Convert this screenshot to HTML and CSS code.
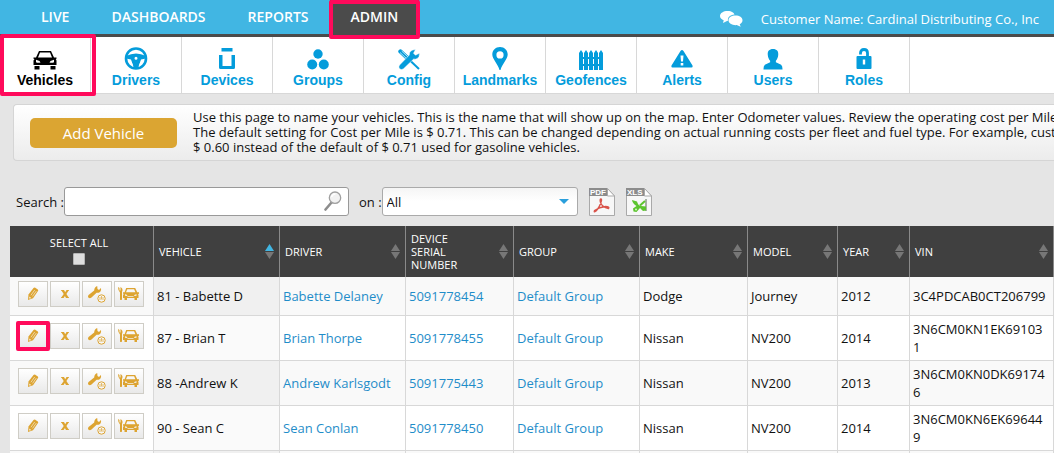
FILE: index.html
```
<!DOCTYPE html>
<html lang="en">
<head>
    <meta charset="UTF-8">
    <meta name="viewport" content="width=device-width, initial-scale=1.0">
    <title>Admin - Vehicles</title>
    <link rel="stylesheet" href="styles.css">
</head>
<body>
    <!-- shared icons -->
    <svg class="sprite" aria-hidden="true">
        <symbol id="i-sort" viewBox="0 0 9 15">
            <path class="up" d="M4.5 0L9 7H0z"/>
            <path class="down" d="M0 8h9l-4.5 7z"/>
        </symbol>
        <symbol id="i-pencil" viewBox="0 0 12 14">
            <path d="M1 13l.5-5.500L6.500 1q.8-.9 1.800-.3l2.500 1.700q.8.7.2 1.700L6 11.200z"/>
            <path d="M3.900 8.300L7.700 3M5.500 9.400L9.300 4.100" stroke="#f6f6f6" stroke-width=".6" fill="none"/>
            <path d="M2.200 9.500l2 1.500-1.700.7z" fill="#f6f6f6"/>
        </symbol>
        <symbol id="i-delete" viewBox="0 0 8 8">
            <path d="M0 0h3l1.200 2.200L5.500 0H8v.8H7.500L5.400 4l2.100 3.200H8V8H5L3.900 5.900 2.600 8H0v-.8h.5L2.700 4 .6.8H0z"/>
        </symbol>
        <symbol id="i-service" viewBox="0 0 18 17">
            <path d="M9.200 0l.3 3 1.500.9L12.900 2q.8 3-1.600 4.400-1.300.7-2.700.3L3.500 11.600q-1.700 1.200-2.900.2-1.200-1.300 0-2.900L6.200 4.500Q6.200 1.300 9.200 0z"/>
            <circle cx="13.500" cy="12.500" r="3.700" fill="#f6f6f6" stroke="#dda431" stroke-width="1"/>
            <path d="M13.500 10v3.500M12 11v3M15 11v3" stroke="#dda431" stroke-width=".7"/>
        </symbol>
        <symbol id="i-repair" viewBox="0 0 21 14">
            <path d="M0 0l1.500 1v2.500h1V0q3 1.500 1.500 5v7.500q-1.300 1-2 0V5.500Q0 4 0 0z"/>
            <path d="M8.200 1h9l2 4.200H21v1.600l-1 .3.500 1V11H19v2h-2.500v-2H9v2H6.500v-2H5V8l.8-1-.8-.4V5.200h1.600zM9.300 2.300L8 5.200h9.400L16.100 2.300zM7 7.300v1.500l2.500.2-.7-1.300zM18.500 7.300v1.500L16 9l.7-1.300z" fill-rule="evenodd"/>
            <path d="M9.500 9.500h6" stroke="#f6f6f6" stroke-width=".7"/>
        </symbol>
    </svg>

    <header class="topbar">
        <nav class="main-nav">
            <a href="#live">LIVE</a>
            <a href="#dashboards">DASHBOARDS</a>
            <a href="#reports">REPORTS</a>
            <a href="#admin" class="active marked">ADMIN</a>
        </nav>
        <div class="account">
            <a href="#chat" aria-label="Messages">
                <svg width="23" height="16" viewBox="0 0 23 16" fill="#fff">
                    <path d="M7.500 0C12 0 14 2 14.500 3.500 10 4 7.500 6 8 9.800L7 10l-4 2 .7-2.800C1.500 8.500 0 7 0 5c0-3 3.500-5 7.500-5z"/>
                    <path d="M15.500 4.500c4 0 7 2 7 4.800 0 1.800-1 3-2.800 4l1 2.500-4-1.700c-4.500.3-8.200-1.500-8.200-4.800 0-2.800 3-4.800 7-4.800z"/>
                </svg>
            </a>
            <span>Customer Name: Cardinal Distributing Co., Inc</span>
        </div>
    </header>

    <nav class="sub-nav">
        <a href="#vehicles" class="active marked">
            <svg width="24" height="20" viewBox="0 0 24 20">
                <path d="M6 1h12l3 6.500h2.500v1.200L22.800 9l.7 1.500V15h-23v-4.500L1.500 9 .5 8.700V7.500H3zM7 2.500L5 7.500h14l-2-5zM3 9.800v2.500q2 1 4.500.2L6.500 11zM21 9.800v2.500q-2 1-4.500.2l1-1.500z" fill-rule="evenodd"/>
                <path d="M1.500 16h5v3.500h-5zM17.500 16h5v3.500h-5z"/>
            </svg>
            Vehicles
        </a>
        <a href="#drivers">
            <svg width="24" height="23" viewBox="0 0 24 23">
                <circle cx="12" cy="11.500" r="10" fill="none" stroke="currentColor" stroke-width="2.600"/>
                <path d="M2 9q10-5 20 0v2.500l-5 1-3 9h-4l-3-9-5-1zM12 9.700a1.500 1.500 0 100 3 1.500 1.500 0 100-3z" fill-rule="evenodd"/>
                <path d="M4 13.500l3.500 1.200L9.300 19Q5.500 17.500 4 13.500zM20 13.500l-3.500 1.200L14.700 19q3.800-1.500 5.300-5.500z" fill="#fff"/>
            </svg>
            Drivers
        </a>
        <a href="#devices">
            <svg width="18" height="22" viewBox="0 0 18 22">
                <path d="M3.500 0h11v3.500h-11zM1 7h3.500v11h9V7H17v12.500q0 1.500-1.500 1.500h-13Q1 21 1 19.500z"/>
            </svg>
            Devices
        </a>
        <a href="#groups">
            <svg width="22" height="21" viewBox="0 0 22 21">
                <circle cx="11" cy="5" r="4.700"/>
                <circle cx="5.200" cy="15.500" r="5"/>
                <circle cx="16.800" cy="15.500" r="5"/>
            </svg>
            Groups
        </a>
        <a href="#config">
            <svg width="22" height="21" viewBox="0 0 22 21">
                <path d="M2.500 2.500l9 8.500" fill="none" stroke="currentColor" stroke-width="4.400" stroke-linecap="round"/>
                <path d="M2 3.500l8 7.500M3.700 2l8 7.500" fill="none" stroke="#fff" stroke-width=".7"/>
                <path d="M11 10.500l10 9.500" fill="none" stroke="currentColor" stroke-width="2"/>
                <path d="M17.500.5l-2 3.700 2 2 3.800-2q.7 4-2.300 5.500-1.600.8-3.300.3L5.500 19.800q-2 1.500-3.900 0-1.500-1.800 0-3.800L11.300 6Q11 1 17.500.500z" stroke="#fff" stroke-width=".5"/>
            </svg>
            Config
        </a>
        <a href="#landmarks">
            <svg width="16" height="23" viewBox="0 0 16 23">
                <path d="M8 0c4.500 0 7.700 3.400 7.700 7.500C15.700 12 10 17 8.500 23h-1C6 17 .3 12 .3 7.500.300 3.400 3.500 0 8 0zM8 4.300a3.600 3.600 0 100 7.200 3.600 3.600 0 100-7.200z" fill-rule="evenodd"/>
            </svg>
            Landmarks
        </a>
        <a href="#geofences">
            <svg width="24" height="20" viewBox="0 0 24 20">
                <path d="M0 3L2 0l2 3v17H0zM5 3l2-3 2 3v17H5zM10 3l2-3 2 3v17h-4zM15 3l2-3 2 3v17h-4zM20 3l2-3 2 3v17h-4z"/>
                <path d="M0 7h24v2H0zM0 14h24v2H0z"/>
            </svg>
            Geofences
        </a>
        <a href="#alerts">
            <svg width="22" height="20" viewBox="0 0 22 20">
                <path d="M9.500 1q1.500-1.800 3 0L21.500 15.500q.5 2-1 2h-19q-1.500 0-1-2zM9.500 5.500l.5 6h2l.5-6zM9.700 13v2.500h2.600V13z" fill-rule="evenodd"/>
            </svg>
            Alerts
        </a>
        <a href="#users">
            <svg width="20" height="21" viewBox="0 0 20 22">
                <path d="M10 0c4 0 5.800 2.300 5.500 6-.2 3-1.300 5-2.500 6.300V14l5.500 2.500Q20 17.500 20 21.500H0q0-4 1.500-5L7 14v-1.700C5.800 11 4.700 9 4.500 6 4.200 2.300 6 0 10 0z"/>
            </svg>
            Users
        </a>
        <a href="#roles">
            <svg width="16" height="22" viewBox="0 0 16 22">
                <path d="M4.500 6.500V5q0-3.500 3.500-3.500T11.500 5v4" fill="none" stroke="currentColor" stroke-width="2.800"/>
                <path d="M1.500 8h13q1 0 1 1v11q0 1-1 1h-13q-1 0-1-1V9q0-1 1-1zM6.800 11.500v5h2.400v-5z" fill-rule="evenodd"/>
            </svg>
            Roles
        </a>
    </nav>

    <main>
        <section class="info">
            <button type="button" class="add">Add Vehicle</button>
            <p>
                Use this page to name your vehicles. This is the name that will show up on the map. Enter Odometer values. Review the operating cost per Mile<br>
                The default setting for Cost per Mile is $ 0.71. This can be changed depending on actual running costs per fleet and fuel type. For example, cust<br>
                $ 0.60 instead of the default of $ 0.71 used for gasoline vehicles.
            </p>
        </section>

        <form class="filters">
            <label for="search">Search :</label>
            <div class="search-box">
                <input type="text" id="search" name="search">
                <svg width="18" height="20" viewBox="0 0 18 20">
                    <path d="M1.500 18.500l6-7" stroke="#8d8d8d" stroke-width="2.600" stroke-linecap="round"/>
                    <circle cx="11" cy="6.700" r="5.700" fill="#f2f2f2" stroke="#a0a0a0" stroke-width="1.300"/>
                    <path d="M7.500 6q1-3 4-3" fill="none" stroke="#fff" stroke-width="1.500"/>
                </svg>
            </div>
            <label for="field" class="on">on :</label>
            <select id="field" name="field">
                <option>All</option>
                <option>Vehicle</option>
                <option>Driver</option>
                <option>Group</option>
            </select>
            <button type="button" class="export" aria-label="Export to PDF">
                <svg width="26" height="28" viewBox="0 0 26 28">
                    <path d="M.5.500h18L25.500 8v19.500H.5z" fill="#f7f7f7" stroke="#a9a9a9"/>
                    <path d="M0 0h18v8H0z" fill="#8c8c8c"/>
                    <path d="M18.500.500V8h7z" fill="#fff" stroke="#a9a9a9"/>
                    <text x="1" y="7">PDF</text>
                    <path d="M12 11q-1.500 0-.5 3.500Q13 19 19.500 20.500q1.500-2-3-2-6 .5-11 4-1 2 1 1Q11 19 12.500 12.500 12.700 11 12 11z" fill="none" stroke="#d9534a" stroke-width="1.300"/>
                </svg>
            </button>
            <button type="button" class="export" aria-label="Export to XLS">
                <svg width="26" height="28" viewBox="0 0 26 28">
                    <path d="M.5.500h18L25.500 8v19.500H.5z" fill="#f7f7f7" stroke="#a9a9a9"/>
                    <path d="M0 0h18v8H0z" fill="#8c8c8c"/>
                    <path d="M18.500.500V8h7z" fill="#fff" stroke="#a9a9a9"/>
                    <text x="1" y="7">XLS</text>
                    <path d="M20 11v12" stroke="#8d9a88" stroke-width="1.500"/>
                    <path d="M6 12l5 1.500q1 4 4 4.500l5 .5v4l-3 .5-3-3-3.500 4-3-.5-.5-3 3.500-2.500Q6.500 15.500 6 12z" fill="#5cc52e"/>
                    <path d="M14 17.500l5-4.500" stroke="#5cc52e" stroke-width="2"/>
                    <circle cx="10" cy="21.500" r="1" fill="#d6f5c8"/>
                </svg>
            </button>
        </form>

        <table>
            <colgroup>
                <col class="c-144"><col class="c-126"><col class="c-126"><col class="c-108"><col class="c-126">
                <col class="c-108"><col class="c-90"><col class="c-72"><col class="c-144">
            </colgroup>
            <thead>
                <tr>
                    <th class="select-all">
                        <label for="all">SELECT ALL</label>
                        <input type="checkbox" id="all">
                    </th>
                    <th><button type="button" class="sort asc">VEHICLE <svg><use href="#i-sort"/></svg></button></th>
                    <th><button type="button" class="sort">DRIVER <svg><use href="#i-sort"/></svg></button></th>
                    <th><button type="button" class="sort">DEVICE<br>SERIAL<br>NUMBER <svg><use href="#i-sort"/></svg></button></th>
                    <th><button type="button" class="sort">GROUP <svg><use href="#i-sort"/></svg></button></th>
                    <th><button type="button" class="sort">MAKE <svg><use href="#i-sort"/></svg></button></th>
                    <th><button type="button" class="sort">MODEL <svg><use href="#i-sort"/></svg></button></th>
                    <th><button type="button" class="sort">YEAR <svg><use href="#i-sort"/></svg></button></th>
                    <th><button type="button" class="sort">VIN <svg><use href="#i-sort"/></svg></button></th>
                </tr>
            </thead>
            <tbody>
                <tr>
                    <td>
                        <div class="actions">
                            <button type="button" aria-label="Edit"><svg width="12" height="14"><use href="#i-pencil"/></svg></button>
                            <button type="button" aria-label="Delete"><svg width="8" height="8"><use href="#i-delete"/></svg></button>
                            <button type="button" aria-label="Service"><svg width="18" height="17"><use href="#i-service"/></svg></button>
                            <button type="button" aria-label="Repairs"><svg width="21" height="14"><use href="#i-repair"/></svg></button>
                        </div>
                    </td>
                    <td>81 - Babette D</td>
                    <td><a href="#driver">Babette Delaney</a></td>
                    <td><a href="#device">5091778454</a></td>
                    <td><a href="#group">Default Group</a></td>
                    <td>Dodge</td>
                    <td>Journey</td>
                    <td>2012</td>
                    <td>3C4PDCAB0CT206799</td>
                </tr>
                <tr>
                    <td>
                        <div class="actions">
                            <button type="button" class="marked" aria-label="Edit"><svg width="12" height="14"><use href="#i-pencil"/></svg></button>
                            <button type="button" aria-label="Delete"><svg width="8" height="8"><use href="#i-delete"/></svg></button>
                            <button type="button" aria-label="Service"><svg width="18" height="17"><use href="#i-service"/></svg></button>
                            <button type="button" aria-label="Repairs"><svg width="21" height="14"><use href="#i-repair"/></svg></button>
                        </div>
                    </td>
                    <td>87 - Brian T</td>
                    <td><a href="#driver">Brian Thorpe</a></td>
                    <td><a href="#device">5091778455</a></td>
                    <td><a href="#group">Default Group</a></td>
                    <td>Nissan</td>
                    <td>NV200</td>
                    <td>2014</td>
                    <td>3N6CM0KN1EK691031</td>
                </tr>
                <tr>
                    <td>
                        <div class="actions">
                            <button type="button" aria-label="Edit"><svg width="12" height="14"><use href="#i-pencil"/></svg></button>
                            <button type="button" aria-label="Delete"><svg width="8" height="8"><use href="#i-delete"/></svg></button>
                            <button type="button" aria-label="Service"><svg width="18" height="17"><use href="#i-service"/></svg></button>
                            <button type="button" aria-label="Repairs"><svg width="21" height="14"><use href="#i-repair"/></svg></button>
                        </div>
                    </td>
                    <td>88 -Andrew K</td>
                    <td><a href="#driver">Andrew Karlsgodt</a></td>
                    <td><a href="#device">5091775443</a></td>
                    <td><a href="#group">Default Group</a></td>
                    <td>Nissan</td>
                    <td>NV200</td>
                    <td>2013</td>
                    <td>3N6CM0KN0DK691746</td>
                </tr>
                <tr>
                    <td>
                        <div class="actions">
                            <button type="button" aria-label="Edit"><svg width="12" height="14"><use href="#i-pencil"/></svg></button>
                            <button type="button" aria-label="Delete"><svg width="8" height="8"><use href="#i-delete"/></svg></button>
                            <button type="button" aria-label="Service"><svg width="18" height="17"><use href="#i-service"/></svg></button>
                            <button type="button" aria-label="Repairs"><svg width="21" height="14"><use href="#i-repair"/></svg></button>
                        </div>
                    </td>
                    <td>90 - Sean C</td>
                    <td><a href="#driver">Sean Conlan</a></td>
                    <td><a href="#device">5091778450</a></td>
                    <td><a href="#group">Default Group</a></td>
                    <td>Nissan</td>
                    <td>NV200</td>
                    <td>2014</td>
                    <td>3N6CM0KN6EK696449</td>
                </tr>
                <tr>
                    <td></td><td></td><td></td><td></td><td></td><td></td><td></td><td></td><td></td>
                </tr>
            </tbody>
        </table>
    </main>
</body>
</html>
```
FILE: styles.css
```
* {
    box-sizing: border-box;
}
body {
    margin: 0;
    background: #e5e5e5;
    color: #111;
    font: 13px/18px "Open Sans", sans-serif;
    overflow-x: hidden;
}
a {
    color: #1f8dc9;
    text-decoration: none;
}
button, input, select {
    font: inherit;
    color: inherit;
}
button {
    cursor: pointer;
}
.sprite {
    display: none;
}

/* pink highlight frame */
.marked {
    position: relative;
}
.marked::after {
    content: "";
    position: absolute;
    inset: -3px;
    border: 4px solid #ff0a5b;
    border-radius: 2px;
    pointer-events: none;
    z-index: 2;
}

.topbar {
    display: flex;
    justify-content: space-between;
    height: 37px;
    background: #41b6e3;
    border-bottom: 3px solid #4b4b4b;
}
.main-nav {
    display: flex;
    padding-left: 20px;
}
.main-nav a {
    padding: 0 21px;
    color: #fff;
    font-size: 14px;
    font-weight: 600;
    line-height: 34px;
}
.main-nav a.active {
    background: #4b4b4b;
}
.main-nav .marked::after {
    inset: 0 -1px -5px;
}
.account {
    display: flex;
    align-items: center;
    gap: 18px;
    padding: 3px 15px 0 0;
    color: #fff;
    white-space: nowrap;
}
.account a {
    display: flex;
}

.sub-nav {
    display: flex;
    background: #fff;
    border-bottom: 1px solid #d8d8d8;
}
.sub-nav a {
    display: flex;
    flex-direction: column;
    align-items: center;
    justify-content: flex-end;
    width: 91px;
    height: 56px;
    padding-bottom: 5px;
    border-right: 1px solid #d8d8d8;
    color: #049cdb;
    font: bold 14px/16px "Liberation Sans", Arial, sans-serif;
}
.sub-nav svg {
    margin-bottom: 2px;
    fill: currentColor;
}
.sub-nav a.active {
    color: #000;
}
.sub-nav .marked::after {
    inset: -3px -6px -3px 0;
}

.info {
    display: flex;
    align-items: center;
    gap: 16px;
    height: 57px;
    margin: 10px 0 0 13px;
    padding-left: 16px;
    border: 1px solid #d5d5d5;
    border-right: 0;
    border-radius: 4px 0 0 4px;
    background: linear-gradient(#fff, #ececec);
    overflow: hidden;
}
.info p {
    margin: 0;
    line-height: 15px;
    white-space: nowrap;
}
.add {
    flex: none;
    width: 147px;
    height: 30px;
    border: 0;
    border-radius: 5px;
    background: #dba532;
    color: #fff;
    font-size: 15px;
}

.filters {
    display: flex;
    align-items: center;
    margin: 26px 0 10px;
    padding-left: 16px;
}
.search-box {
    position: relative;
    width: 285px;
    height: 29px;
}
.search-box input {
    width: 100%;
    height: 100%;
    padding: 0 28px 0 5px;
    border: 1px solid #999;
    border-radius: 3px;
    background: #fff;
}
.search-box svg {
    position: absolute;
    top: 4px;
    right: 7px;
    fill: none;
}
.filters .on {
    margin-left: 10px;
}
.filters select {
    width: 196px;
    height: 29px;
    padding: 0 4px;
    border: 1px solid #aaa;
    border-radius: 3px;
    appearance: none;
    background: url("data:image/svg+xml,%3Csvg xmlns='http://www.w3.org/2000/svg' width='10' height='5'%3E%3Cpath d='M0 0h10L5 5z' fill='%232a9fdc'/%3E%3C/svg%3E") no-repeat right 8px center, linear-gradient(#f5f5f5, #fff 50%);
}
.export {
    display: flex;
    margin-left: 11px;
    padding: 0;
    border: 0;
    background: none;
}
.export text {
    fill: #fff;
    font: bold 8px "Liberation Sans", Arial, sans-serif;
}

table {
    width: calc(100% - 10px);
    margin-left: 10px;
    border-collapse: separate;
    border-spacing: 0;
    table-layout: fixed;
}
.c-144 { width: 144px; }
.c-126 { width: 126px; }
.c-108 { width: 108px; }
.c-90 { width: 90px; }
.c-72 { width: 72px; }

th {
    height: 51px;
    padding: 6px 5px;
    background: #404040;
    border-right: 1px solid #8a8a8a;
    color: #fff;
    font-size: 11px;
    font-weight: 500;
    line-height: 13px;
    text-align: left;
}
.select-all {
    padding: 0 10px 2px 5px;
    text-align: center;
}
.select-all label {
    display: block;
    margin-bottom: 4px;
}
.select-all input {
    display: block;
    width: 12px;
    height: 12px;
    margin: 0 auto;
    appearance: none;
    border: 1px solid #b5b5b5;
    border-radius: 1px;
    background: #dedede;
}
.sort {
    position: relative;
    display: block;
    width: 100%;
    padding: 0 14px 0 0;
    border: 0;
    background: none;
    text-align: left;
}
.sort svg {
    position: absolute;
    top: calc(50% - 8px);
    right: 0;
    width: 9px;
    height: 15px;
    --up: #777;
    fill: #777;
}
.asc svg {
    --up: #41b6e3;
}
.up {
    fill: var(--up);
}

td {
    padding: 4px 5px 4px 3px;
    background: #fff;
    border-right: 1px solid #d8d8d8;
    border-bottom: 1px solid #d8d8d8;
    word-break: break-all;
}
td:nth-child(2) {
    background: #fafafa;
}
tbody tr:nth-child(odd) td {
    background: #f9f9f9;
}
tbody tr:nth-child(odd) td:nth-child(2) {
    background: #f0f0f0;
}
.actions {
    display: flex;
    justify-content: center;
    gap: 2px;
    margin-bottom: 4px;
}
.actions button {
    display: flex;
    align-items: center;
    justify-content: center;
    width: 30px;
    height: 26px;
    padding: 0;
    border: 1px solid #cfcdc6;
    background: linear-gradient(#fff, #e9e9e9);
}
.actions svg {
    fill: #dda431;
}
```
